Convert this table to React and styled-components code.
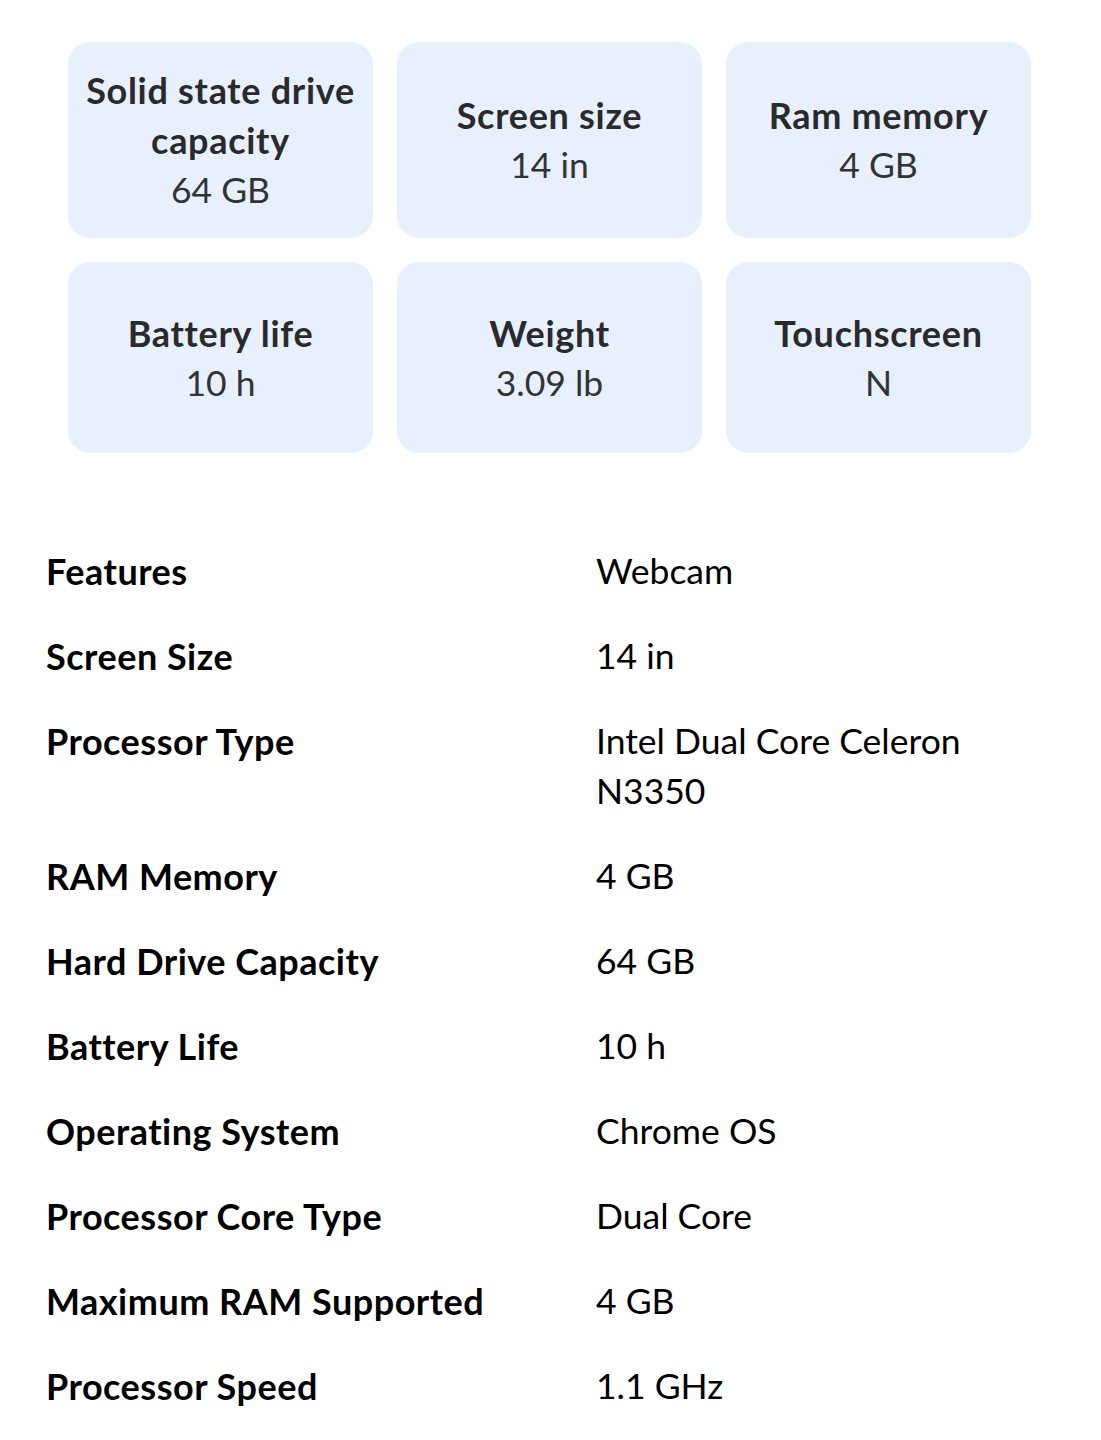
import React from "react";
import styled, { createGlobalStyle } from "styled-components";

const GlobalStyle = createGlobalStyle`
  body {
    margin: 0;
    background: #fff;
    font-family: "Lato", "Open Sans", sans-serif;
  }
`;

const cards = [
  { title: "Solid state drive capacity", value: "64 GB" },
  { title: "Screen size", value: "14 in" },
  { title: "Ram memory", value: "4 GB" },
  { title: "Battery life", value: "10 h" },
  { title: "Weight", value: "3.09 lb" },
  { title: "Touchscreen", value: "N" },
];

const specs = [
  ["Features", "Webcam"],
  ["Screen Size", "14 in"],
  ["Processor Type", "Intel Dual Core Celeron N3350"],
  ["RAM Memory", "4 GB"],
  ["Hard Drive Capacity", "64 GB"],
  ["Battery Life", "10 h"],
  ["Operating System", "Chrome OS"],
  ["Processor Core Type", "Dual Core"],
  ["Maximum RAM Supported", "4 GB"],
  ["Processor Speed", "1.1 GHz"],
];

export default function App() {
  return (
    <Page>
      <GlobalStyle />
      <CardGrid>
        {cards.map((c) => (
          <Card key={c.title}>
            <CardTitle>{c.title}</CardTitle>
            <CardValue>{c.value}</CardValue>
          </Card>
        ))}
      </CardGrid>
      <SpecTable>
        {specs.map(([label, value]) => (
          <React.Fragment key={label}>
            <SpecLabel>{label}</SpecLabel>
            <SpecValue>{value}</SpecValue>
          </React.Fragment>
        ))}
      </SpecTable>
    </Page>
  );
}

const Page = styled.div`
  display: flex;
  flex-direction: column;
  padding: 42px 0 40px;
`;

const CardGrid = styled.div`
  display: grid;
  grid-template-columns: repeat(3, 305px);
  grid-template-rows: 196px 191px;
  gap: 24px;
  padding: 0 70px 0 68px;
`;

const Card = styled.div`
  display: flex;
  flex-direction: column;
  justify-content: center;
  align-items: center;
  text-align: center;
  background: #e8f0fd;
  border-radius: 22px;
  padding: 0 16px;
  line-height: 50px;
`;

const CardTitle = styled.div`
  font-size: 36px;
  font-weight: 700;
  letter-spacing: 0.7px;
  color: #2a2a2c;
`;

const CardValue = styled.div`
  font-size: 35.5px;
  font-weight: 400;
  color: #333335;
`;

const SpecTable = styled.div`
  display: grid;
  grid-template-columns: 550px 1fr;
  row-gap: 35px;
  padding: 93px 60px 0 46px;
  line-height: 50px;
  color: #000;
`;

const SpecLabel = styled.div`
  font-size: 36px;
  font-weight: 700;
  letter-spacing: 0.5px;
`;

const SpecValue = styled.div`
  font-size: 35.5px;
  font-weight: 400;
  max-width: 390px;
`;
